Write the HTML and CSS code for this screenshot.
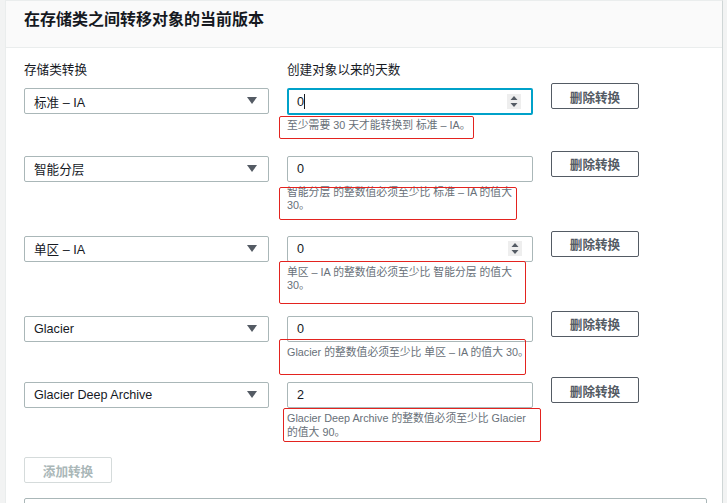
FILE: index.html
```html
<!DOCTYPE html>
<html lang="zh-CN">
<head>
<meta charset="utf-8">
<title>转换</title>
<link rel="stylesheet" href="styles.css">
</head>
<body>
<section class="panel">
  <header class="panel-head">
    <h2 class="panel-title">在存储类之间转移对象的当前版本</h2>
  </header>
  <div class="panel-body">
    <div class="labels">
      <span class="label label-a">存储类转换</span>
      <span class="label label-b">创建对象以来的天数</span>
    </div>
    <div class="rows">
      <div class="row">
        <div class="select"><span class="select-value">标准 – IA</span><svg class="arrow" width="10" height="8" viewBox="0 0 10 8"><path d="M0 0h10L5 7z" fill="#545b64"/></svg></div>
        <div class="field">
          <div class="input input-focus"><span class="value">0</span><span class="caret"></span><span class="spin"><svg width="8" height="13" viewBox="0 0 8 13"><path d="M4 1L7.5 5H0.5z M0.5 8h7L4 12z" fill="#545b64"/></svg></span></div>
          <div class="error">至少需要 30 天才能转换到 标准 – IA。<span class="mark mark-1"></span></div>
        </div>
        <button class="btn">删除转换</button>
      </div>
      <div class="row">
        <div class="select"><span class="select-value">智能分层</span><svg class="arrow" width="10" height="8" viewBox="0 0 10 8"><path d="M0 0h10L5 7z" fill="#545b64"/></svg></div>
        <div class="field">
          <div class="input"><span class="value">0</span></div>
          <div class="error">智能分层 的整数值必须至少比 标准 – IA 的值大<br>30。<span class="mark mark-2"></span></div>
        </div>
        <button class="btn">删除转换</button>
      </div>
      <div class="row">
        <div class="select"><span class="select-value">单区 – IA</span><svg class="arrow" width="10" height="8" viewBox="0 0 10 8"><path d="M0 0h10L5 7z" fill="#545b64"/></svg></div>
        <div class="field">
          <div class="input"><span class="value">0</span><span class="spin"><svg width="8" height="13" viewBox="0 0 8 13"><path d="M4 1L7.5 5H0.5z M0.5 8h7L4 12z" fill="#545b64"/></svg></span></div>
          <div class="error">单区 – IA 的整数值必须至少比 智能分层 的值大<br>30。<span class="mark mark-3"></span></div>
        </div>
        <button class="btn">删除转换</button>
      </div>
      <div class="row">
        <div class="select"><span class="select-value">Glacier</span><svg class="arrow" width="10" height="8" viewBox="0 0 10 8"><path d="M0 0h10L5 7z" fill="#545b64"/></svg></div>
        <div class="field">
          <div class="input"><span class="value">0</span></div>
          <div class="error">Glacier 的整数值必须至少比 单区 – IA 的值大 30。<span class="mark mark-4"></span></div>
        </div>
        <button class="btn">删除转换</button>
      </div>
      <div class="row">
        <div class="select"><span class="select-value">Glacier Deep Archive</span><svg class="arrow" width="10" height="8" viewBox="0 0 10 8"><path d="M0 0h10L5 7z" fill="#545b64"/></svg></div>
        <div class="field">
          <div class="input"><span class="value">2</span></div>
          <div class="error">Glacier Deep Archive 的整数值必须至少比 Glacier<br>的值大 90。<span class="mark mark-5"></span></div>
        </div>
        <button class="btn">删除转换</button>
      </div>
    </div>
    <button class="btn btn-disabled">添加转换</button>
    <div class="next-box"></div>
  </div>
</section>
</body>
</html>
```
FILE: styles.css
```css
html, body {
  margin: 0;
  padding: 0;
}
body {
  background: #f2f3f3;
  font-family: "Liberation Sans", "Noto Sans CJK SC", sans-serif;
  color: #16191f;
  overflow: hidden;
  height: 503px;
}
.panel {
  box-sizing: border-box;
  margin-left: 5px;
  width: 718px;
  min-height: 600px;
  background: #ffffff;
  border: 1px solid #eaeded;
  border-right-color: #cfd6d6;
}
.panel-head {
  background: #fafafa;
  border-bottom: 1px solid #eaeded;
  padding: 9px 18px 17px;
}
.panel-title {
  margin: 0;
  font-size: 16px;
  line-height: 20px;
  font-weight: bold;
  color: #16191f;
}
.panel-body {
  padding: 14px 18px 0;
}
.labels {
  display: flex;
  font-size: 12.6px;
  line-height: 16px;
  margin-bottom: 10px;
}
.label-a {
  width: 263px;
}
.rows {
  display: flex;
  flex-direction: column;
  gap: 23px;
}
.row {
  display: flex;
  align-items: flex-start;
  gap: 18px;
}
.select {
  box-sizing: border-box;
  width: 245px;
  height: 26px;
  border: 1px solid #aab7b8;
  border-radius: 2px;
  display: flex;
  align-items: center;
  justify-content: space-between;
  padding: 0 11px 0 9px;
  font-size: 12.6px;
  background: #fff;
}
.arrow {
  display: block;
}
.field {
  width: 246px;
  display: flex;
  flex-direction: column;
}
.input {
  box-sizing: border-box;
  height: 26px;
  border: 1px solid #aab7b8;
  border-radius: 2px;
  display: flex;
  align-items: center;
  padding: 0 10px 0 9px;
  font-size: 12.6px;
  background: #fff;
}
.input-focus {
  border: 2px solid #00a1c9;
  height: 27px;
  padding-left: 8px;
}
.caret {
  width: 1px;
  height: 15px;
  background: #16191f;
}
.spin {
  margin-left: auto;
  width: 14px;
  height: 15px;
  background: #eeeeee;
  display: flex;
  align-items: center;
  justify-content: center;
}
.spin svg {
  display: block;
}
.error {
  position: relative;
  margin-top: 4px;
  font-size: 10.8px;
  line-height: 13.5px;
  color: #687078;
  white-space: nowrap;
}
.mark {
  position: absolute;
  border: 1.5px solid #e3231f;
  border-radius: 2px;
  box-sizing: border-box;
}
.mark-1 { left: -8px; top: -3px; width: 195px; height: 23px; }
.mark-2 { left: -8px; top: 1px; width: 238px; height: 33px; }
.mark-3 { left: -8px; top: -5px; width: 247px; height: 43px; }
.mark-4 { left: -8px; top: -7px; width: 247px; height: 36px; }
.mark-5 { left: -4px; top: -4px; width: 258px; height: 34px; }
.btn {
  box-sizing: border-box;
  width: 88px;
  height: 26px;
  margin-top: -5px;
  border: 1px solid #545b64;
  border-radius: 2px;
  background: #fff;
  color: #545b64;
  font-family: "Liberation Sans", "Noto Sans CJK SC", sans-serif;
  font-size: 12.6px;
  font-weight: bold;
  padding: 0;
}
.btn-disabled {
  display: block;
  margin-top: 18px;
  border-color: #d5dbdb;
  color: #aab7b8;
}
.next-box {
  margin-top: 15px;
  width: 683px;
  height: 40px;
  border: 1px solid #aab7b8;
  border-radius: 2px;
  box-sizing: border-box;
}
```
